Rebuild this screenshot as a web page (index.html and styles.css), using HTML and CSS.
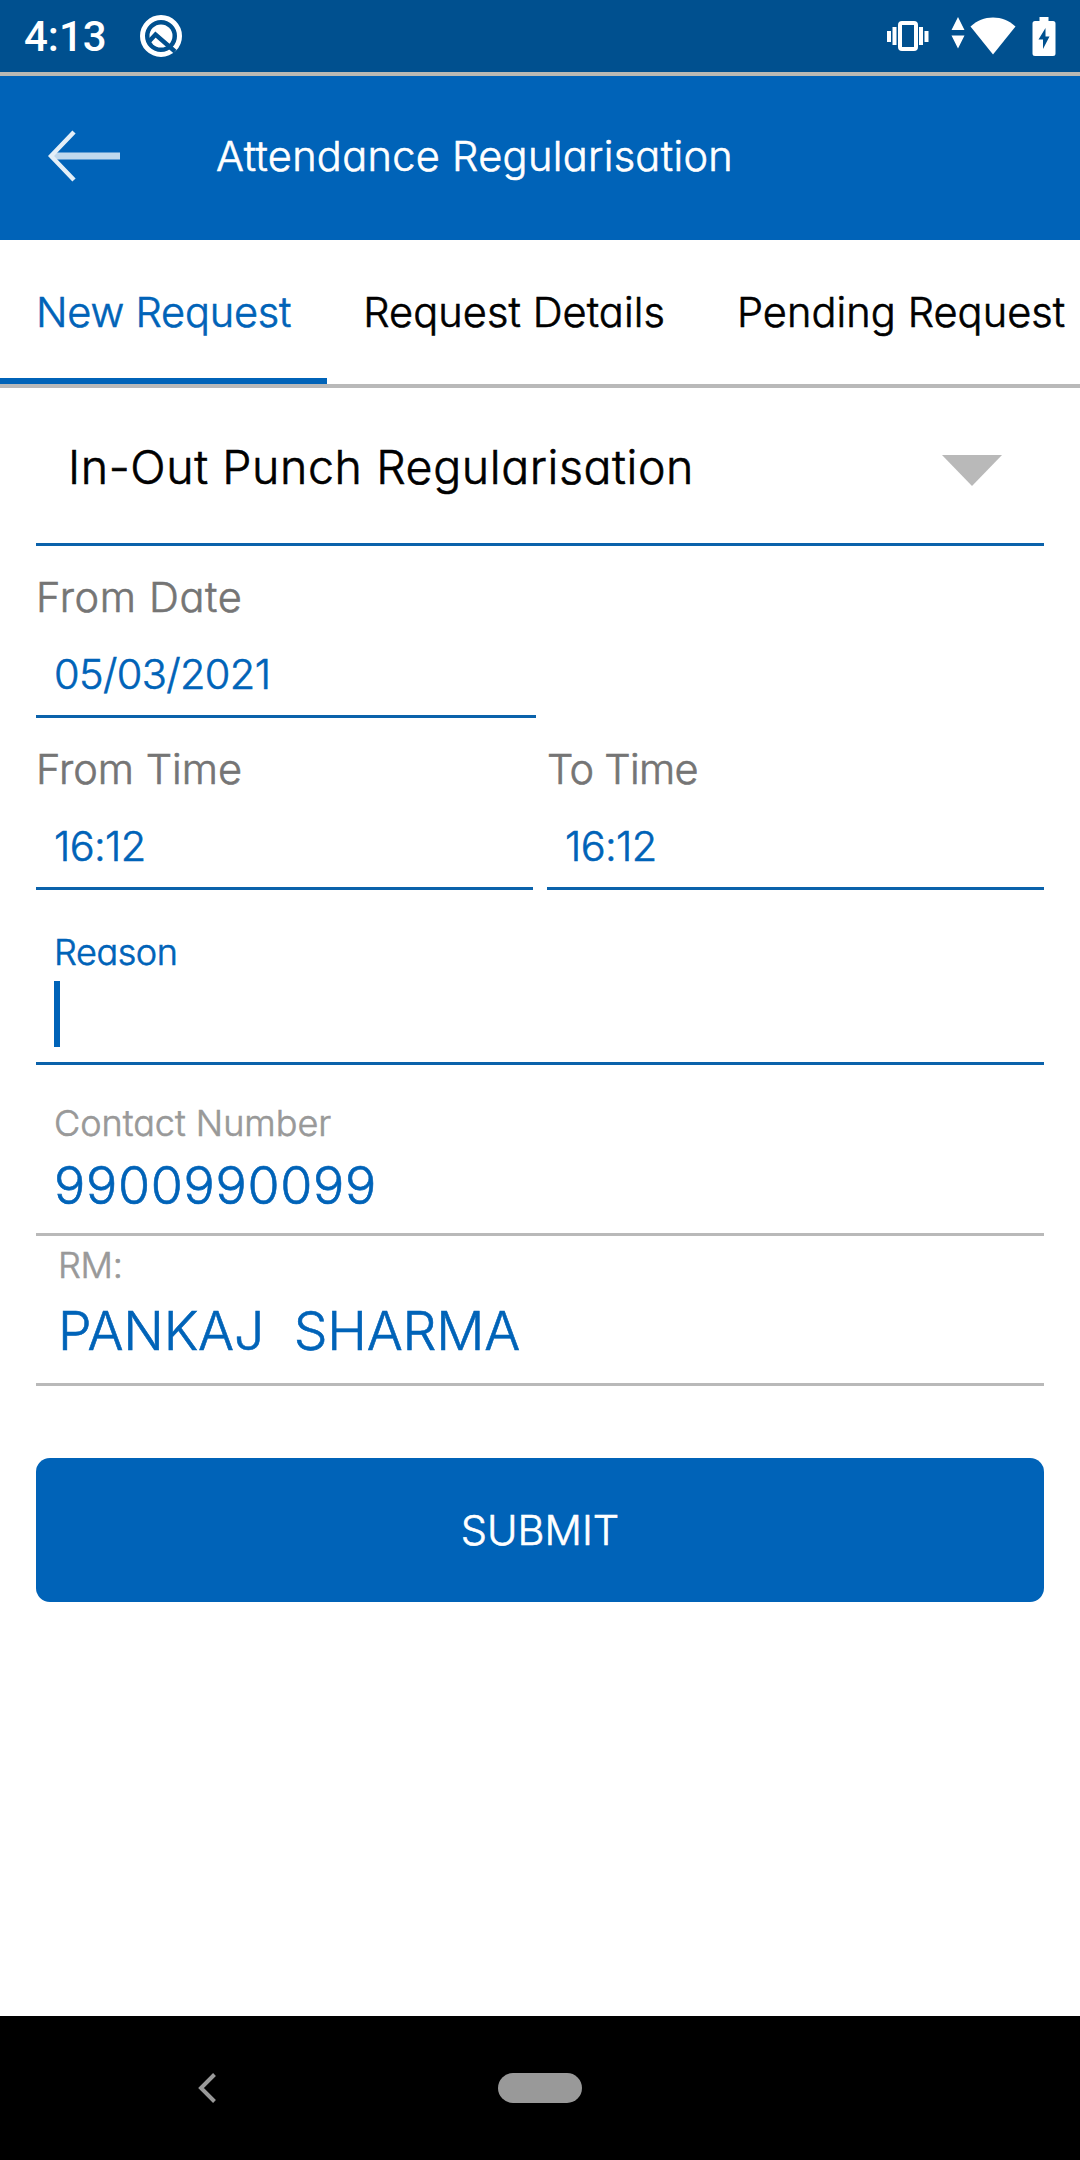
FILE: index.html
```html
<!DOCTYPE html>
<html lang="en">
<head>
  <meta charset="UTF-8">
  <meta name="viewport" content="width=device-width, initial-scale=1.0">
  <title>Attendance Regularisation</title>
  <link rel="stylesheet" href="styles.css">
</head>
<body>
  <div class="status-bar">
    <span class="clock">4:13</span>
    <svg class="icon-q" width="42" height="42" viewBox="0 0 42 42">
      <circle cx="21" cy="21" r="18.5" fill="none" stroke="#fff" stroke-width="5"/>
      <circle cx="21" cy="21" r="11.5" fill="#fff"/>
      <path d="M9.500 26L15.500 19.500L35 36.500" fill="none" stroke="#00508f" stroke-width="4.400"/>
    </svg>
    <div class="status-icons">
      <svg class="icon-vibrate" width="42" height="30" viewBox="0 0 42 30">
        <path d="M0 10h4v11H0zM5.500 6h4v18h-4zM32 6h4v18h-4zM37.500 10h4v11h-4z" fill="#fff"/>
        <rect x="13" y="2" width="16" height="26" rx="2" fill="none" stroke="#fff" stroke-width="4"/>
      </svg>
      <svg class="icon-data" width="14" height="32" viewBox="0 0 14 32">
        <path d="M7 0l6.500 13H.5zM7 31.500L.5 18.500h13z" fill="#fff"/>
      </svg>
      <svg class="icon-wifi" width="46" height="38" viewBox="0 0 46 38">
        <path d="M23 37.500L.5 9.500C7 3.500 14.500.5 23 .5s16 3 22.500 9z" fill="#fff"/>
      </svg>
      <svg class="icon-battery" width="24" height="39" viewBox="0 0 24 39">
        <path d="M7.500 0h9v4H21a2.500 2.500 0 0 1 2.500 2.500v30A2.500 2.500 0 0 1 21 39H3a2.500 2.500 0 0 1-2.500-2.500v-30A2.500 2.500 0 0 1 3 4h4.500z" fill="#fff"/>
        <path d="M13.500 11v8.500h4L11 32v-9.500H6.500z" fill="#00508f"/>
      </svg>
    </div>
  </div>

  <div class="header">
    <svg class="back" width="72" height="52" viewBox="0 0 72 52">
      <path d="M4 26h68" stroke="#bfd8ed" stroke-width="7"/>
      <path d="M26 2L3 26L26 50" fill="none" stroke="#e3eff8" stroke-width="4.500"/>
    </svg>
    <h1>Attendance Regularisation</h1>
  </div>

  <div class="tabs">
    <div class="tab active">New Request</div>
    <div class="tab">Request Details</div>
    <div class="tab">Pending Request</div>
  </div>

  <div class="form">
    <div class="select">
      <span>In-Out Punch Regularisation</span>
      <svg class="arrow" width="62" height="31" viewBox="0 0 62 31">
        <path d="M1 0h60L31 31z" fill="#b9b9b9"/>
      </svg>
    </div>

    <div class="field date">
      <div class="label">From Date</div>
      <div class="value">05/03/2021</div>
    </div>

    <div class="time-row">
      <div class="field">
        <div class="label">From Time</div>
        <div class="value">16:12</div>
      </div>
      <div class="field to">
        <div class="label">To Time</div>
        <div class="value">16:12</div>
      </div>
    </div>

    <div class="input reason">
      <div class="hint">Reason</div>
      <div class="cursor"></div>
    </div>

    <div class="input contact">
      <div class="hint">Contact Number</div>
      <div class="number">9900990099</div>
    </div>

    <div class="input rm">
      <div class="hint">RM:</div>
      <div class="name">PANKAJ  SHARMA</div>
    </div>

    <div class="submit">SUBMIT</div>
  </div>

  <div class="nav-bar">
    <svg class="nav-back" width="18" height="30" viewBox="0 0 18 30">
      <path d="M16.500 1.500L3 15L16.500 28.500" fill="none" stroke="#999" stroke-width="4"/>
    </svg>
    <div class="nav-home"></div>
  </div>
</body>
</html>
```
FILE: styles.css
```css
* {
  margin: 0;
  padding: 0;
  box-sizing: border-box;
}

body {
  height: 2160px;
  display: flex;
  flex-direction: column;
  font-family: Inter, "Liberation Sans", sans-serif;
  font-feature-settings: "cv11";
  font-size: 41.5px;
  font-weight: 300;
  -webkit-text-stroke: 0.6px;
  background-color: #fff;
  color: #000;
  overflow: hidden;
}

svg {
  display: block;
  flex: none;
}

/* status bar */
.status-bar {
  display: flex;
  align-items: center;
  height: 76px;
  padding: 0 24px;
  background-color: #00508f;
  border-bottom: 4px solid #b9b9b4;
  color: #fff;
}

.clock {
  padding-top: 2px;
  font-family: Roboto, sans-serif;
  font-size: 42px;
  font-weight: 500;
  line-height: 72px;
  -webkit-text-stroke: 0;
}

.icon-q {
  margin-left: 33px;
}

.status-icons {
  display: flex;
  align-items: center;
  margin-left: auto;
}

.icon-data {
  margin: 0 5px 6px 22px;
}

.icon-battery {
  margin-left: 16px;
}

/* header */
.header {
  display: flex;
  align-items: center;
  height: 164px;
  padding: 0 48px 4px;
  background-color: #0063b8;
  color: #fff;
}

.header h1 {
  margin-left: 96px;
  font-size: 41.5px;
  font-weight: 300;
  letter-spacing: 0.32px;
}

/* tabs */
.tabs {
  display: flex;
  height: 148px;
  border-bottom: 4px solid #b9b9b9;
  line-height: 144px;
  white-space: nowrap;
}

.tab {
  flex: none;
  padding: 0 36px;
  letter-spacing: 0.08px;
}

.tab.active {
  color: #0063b8;
  letter-spacing: -0.2px;
  box-shadow: inset 0 -6px #0063b8;
}

/* form */
.form {
  padding: 0 36px;
}

.select {
  display: flex;
  align-items: center;
  justify-content: space-between;
  height: 158px;
  padding: 3px 41px 0 32px;
  border-bottom: 3px solid #0a62ab;
  font-size: 46.5px;
  letter-spacing: 0.58px;
}

.select .arrow {
  margin-top: 6px;
}

.field {
  height: 172px;
  padding-top: 17px;
  border-bottom: 3px solid #0a62ab;
}

.field.date {
  width: 500px;
}

.label {
  line-height: 68px;
  color: #757575;
}

.date .label {
  letter-spacing: 0.65px;
}

.to .label {
  letter-spacing: -0.68px;
}

.value {
  padding: 3px 0 0 18px;
  line-height: 81px;
  letter-spacing: -0.65px;
  color: #0063b8;
}

.time-row {
  display: grid;
  grid-template-columns: 1fr 1fr;
  gap: 14px;
}

.input {
  border-bottom: 3px solid #b9b9b9;
}

.hint {
  height: 48px;
  line-height: 48px;
  padding-left: 18px;
  font-size: 36px;
  color: #999;
}

.reason {
  height: 175px;
  padding-top: 38px;
  border-color: #0a62ab;
}

.reason .hint {
  letter-spacing: -0.42px;
  color: #0063b8;
}

.cursor {
  width: 6px;
  height: 66px;
  margin: 5px 0 0 18px;
  background-color: #0063b8;
}

.contact {
  height: 171px;
  padding-top: 34px;
}

.number {
  padding-left: 18px;
  line-height: 77px;
  font-size: 52px;
  letter-spacing: 0.68px;
  color: #0063b8;
}

.rm {
  height: 150px;
  padding-top: 5px;
}

.rm .hint {
  padding-left: 22px;
  letter-spacing: -0.3px;
}

.name {
  padding-left: 22px;
  line-height: 83px;
  font-size: 53.5px;
  letter-spacing: -0.2px;
  color: #0063b8;
  white-space: pre;
}

.submit {
  height: 144px;
  margin-top: 72px;
  border-radius: 14px;
  background-color: #0063b8;
  color: #fff;
  line-height: 144px;
  text-align: center;
}

/* navigation bar */
.nav-bar {
  display: flex;
  align-items: center;
  height: 144px;
  margin-top: auto;
  padding-left: 198px;
  background-color: #000;
}

.nav-home {
  width: 84px;
  height: 30px;
  margin-left: 282px;
  border-radius: 15px;
  background-color: #999;
}
```
